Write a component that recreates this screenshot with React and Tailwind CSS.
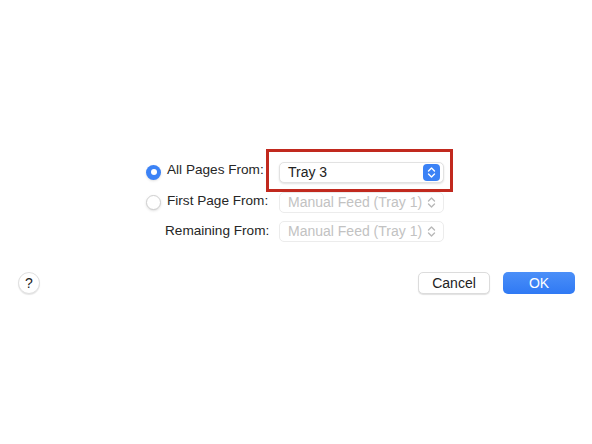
import React from 'react';

function Chevrons({ color }) {
  return (
    <svg width="9" height="13" viewBox="0 0 9 13" fill="none">
      <path d="M1.5 5 L4.5 2 L7.5 5" stroke={color} strokeWidth="1.4" strokeLinecap="round" strokeLinejoin="round" />
      <path d="M1.5 8 L4.5 11 L7.5 8" stroke={color} strokeWidth="1.4" strokeLinecap="round" strokeLinejoin="round" />
    </svg>
  );
}

function Radio({ checked }) {
  if (checked) {
    return (
      <div className="w-[15px] h-[15px] shrink-0 rounded-full bg-[#3b82f6] flex items-center justify-center shadow-sm">
        <div className="w-[6px] h-[6px] rounded-full bg-white"></div>
      </div>
    );
  }
  return <div className="w-[15px] h-[15px] shrink-0 rounded-full border border-[#cfcfcf] bg-white shadow-sm"></div>;
}

function Popup({ value, disabled }) {
  return (
    <div
      className={
        'w-[165px] h-[21px] shrink-0 rounded-[5px] bg-white flex items-center justify-between pl-[8px] pr-[3px] ' +
        (disabled ? 'border border-[#ececec]' : 'border border-[#e2e2e2] shadow-[0_1px_2px_rgba(0,0,0,0.12)]')
      }
    >
      <span className={'whitespace-nowrap text-[14px] ' + (disabled ? 'text-[#c2c2c2]' : 'text-[#222]')}>{value}</span>
      {disabled ? (
        <div className="w-[17px] h-[17px] flex items-center justify-center">
          <Chevrons color="#b8b8b8" />
        </div>
      ) : (
        <div className="w-[17px] h-[17px] rounded-[4px] bg-[#3b82f6] flex items-center justify-center">
          <Chevrons color="#ffffff" />
        </div>
      )}
    </div>
  );
}

export default function App() {
  return (
    <div className="w-[592px] h-[444px] bg-white text-[#262626] font-['Liberation_Sans',sans-serif]">
      <div className="pt-[162px] pl-[146px]">
        {/* All Pages From */}
        <div className="relative flex items-center h-[21px]">
          <div className="w-[133px] shrink-0 flex items-center">
            <Radio checked />
            <span className="ml-[6px] text-[13.6px] whitespace-nowrap -mt-[4px]">All Pages From:</span>
          </div>
          <Popup value="Tray 3" />
          <div className="absolute left-[120px] top-[-13px] w-[187px] h-[43px] border-[3px] border-[#c1291e]"></div>
        </div>

        {/* First Page From */}
        <div className="flex items-center h-[21px] mt-[9px]">
          <div className="w-[133px] shrink-0 flex items-center">
            <Radio />
            <span className="ml-[6px] text-[13.6px] whitespace-nowrap -mt-[2px]">First Page From:</span>
          </div>
          <Popup value="Manual Feed (Tray 1)" disabled />
        </div>

        {/* Remaining From */}
        <div className="flex items-center h-[21px] mt-[8px]">
          <div className="w-[133px] shrink-0 flex items-center">
            <span className="ml-[19px] text-[13.6px] whitespace-nowrap">Remaining From:</span>
          </div>
          <Popup value="Manual Feed (Tray 1)" disabled />
        </div>
      </div>

      <div className="mt-[30px] flex items-center pl-[18px] pr-[17px]">
        <div className="w-[22px] h-[22px] rounded-full bg-white border border-[#e0e0e0] shadow-[0_1px_1px_rgba(0,0,0,0.1)] flex items-center justify-center text-[14px] text-[#222]">
          ?
        </div>
        <div className="ml-auto flex items-center gap-[13px]">
          <button className="w-[72px] h-[22px] rounded-[5px] bg-white border border-[#dcdcdc] shadow-[0_1px_1px_rgba(0,0,0,0.12)] text-[14px] text-[#222]">
            Cancel
          </button>
          <button className="w-[72px] h-[22px] rounded-[5px] bg-gradient-to-b from-[#4b8ff8] to-[#2f79f4] text-white text-[14px]">
            OK
          </button>
        </div>
      </div>
    </div>
  );
}
